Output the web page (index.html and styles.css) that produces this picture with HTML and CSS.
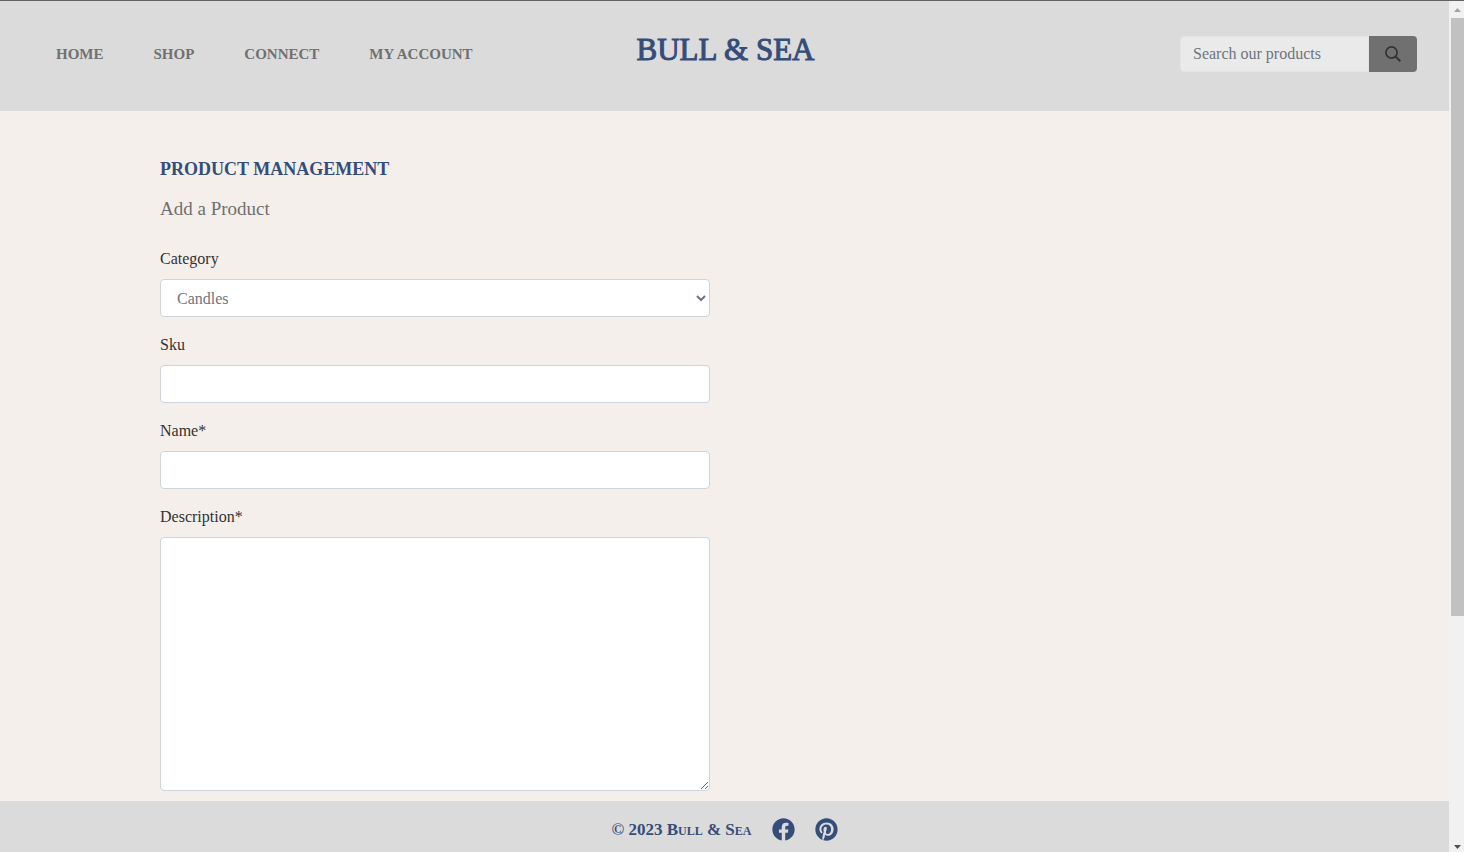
FILE: index.html
```html
<!DOCTYPE html>
<html lang="en">
<head>
<meta charset="utf-8">
<meta name="viewport" content="width=device-width, initial-scale=1">
<title>Bull &amp; Sea</title>
<link rel="stylesheet" href="styles.css">
</head>
<body>
<div class="window">
  <div class="page">
    <header class="header">
      <nav class="nav">
        <a href="#">HOME</a>
        <a href="#">SHOP</a>
        <a href="#">CONNECT</a>
        <a href="#">MY ACCOUNT</a>
      </nav>
      <a class="brand" href="#">BULL &amp; SEA</a>
      <form class="search">
        <input class="search-input" type="text" placeholder="Search our products" aria-label="Search our products">
        <button class="search-button" type="button" aria-label="Search">
          <svg width="16" height="16" viewBox="0 0 16 16" fill="none" stroke="currentColor" aria-hidden="true"><circle cx="6.500" cy="6.500" r="5.600" stroke-width="1.700"/><path d="M10.600 10.600l4.700 4.700" stroke-width="2"/></svg>
        </button>
      </form>
    </header>
    <main class="main">
      <h1 class="title">PRODUCT MANAGEMENT</h1>
      <h2 class="subtitle">Add a Product</h2>
      <form class="form">
        <div class="field">
          <label for="category">Category</label>
          <select class="control select" id="category"><option>Candles</option></select>
        </div>
        <div class="field">
          <label for="sku">Sku</label>
          <input class="control" id="sku" type="text">
        </div>
        <div class="field">
          <label for="name">Name*</label>
          <input class="control" id="name" type="text" required>
        </div>
        <div class="field">
          <label for="description">Description*</label>
          <textarea class="control area" id="description" rows="10" required></textarea>
        </div>
      </form>
    </main>
    <footer class="footer">
      <span class="copyright">© 2023 Bull &amp; Sea</span>
      <a href="#" aria-label="Facebook"><svg width="23" height="23" viewBox="0 0 512 512" aria-hidden="true"><path fill="currentColor" d="M504 256C504 119 393 8 256 8S8 119 8 256c0 123.780 90.690 226.380 209.250 245V327.690h-63V256h63v-54.640c0-62.150 37-96.480 93.670-96.480 27.140 0 55.520 4.840 55.520 4.840v61h-31.280c-30.800 0-40.410 19.120-40.410 38.730V256h68.780l-11 71.690h-57.780V501C413.310 482.380 504 379.780 504 256z"/></svg></a>
      <a href="#" aria-label="Pinterest"><svg width="23" height="23" viewBox="0 0 496 512" aria-hidden="true"><path fill="currentColor" d="M496 256c0 137-111 248-248 248-25.600 0-50.200-3.900-73.400-11.100 10.100-16.500 25.200-43.500 30.800-65 3-11.600 15.400-59 15.400-59 8.100 15.400 31.700 28.500 56.800 28.500 74.800 0 128.700-68.800 128.700-154.300 0-81.900-66.900-143.200-152.900-143.200-107 0-163.900 71.800-163.900 150.100 0 36.400 19.400 81.700 50.300 96.100 4.700 2.200 7.200 1.200 8.300-3.300.8-3.400 5-20.300 6.900-28.100.6-2.500.3-4.700-1.700-7.100-10.100-12.500-18.300-35.300-18.300-56.600 0-54.700 41.400-107.600 112-107.600 60.900 0 103.600 41.500 103.600 100.900 0 67.100-33.900 113.600-78 113.600-24.300 0-42.600-20.100-36.700-44.800 7-29.500 20.500-61.300 20.500-82.600 0-19-10.200-34.900-31.400-34.900-24.900 0-44.900 25.700-44.900 60.200 0 22 7.400 36.800 7.400 36.800s-24.500 103.800-29 123.200c-5 21.400-3 51.600-.9 71.200C65.400 450.900 0 361.100 0 256 0 119 111 8 248 8s248 111 248 248z"/></svg></a>
    </footer>
  </div>
  <div class="scrollbar" aria-hidden="true">
    <svg class="arrow up" width="13" height="17" viewBox="0 0 13 17"><path fill="currentColor" d="M3 11h7L6.500 7z"/></svg>
    <div class="track"><div class="thumb"></div></div>
    <svg class="arrow" width="13" height="17" viewBox="0 0 13 17"><path fill="currentColor" d="M3 10h7L6.500 14z"/></svg>
  </div>
</div>
</body>
</html>
```
FILE: styles.css
```css
* { box-sizing: border-box; }

body {
  margin: 0;
  font-family: "Liberation Serif", "Times New Roman", serif;
  font-size: 16px;
  line-height: 24px;
  color: #333;
  background: #f4efeb;
}

a { color: inherit; text-decoration: none; }
svg { display: block; }

.window {
  display: flex;
  height: 100vh;
  border-top: 1px solid #656163;
}

.page {
  flex: 1;
  min-width: 0;
  display: flex;
  flex-direction: column;
}

.header {
  display: grid;
  grid-template-columns: 1fr auto 1fr;
  align-items: start;
  padding: 32px 32px 36px 56px;
  background: #dbdbdb;
}

.nav {
  display: flex;
  gap: 50px;
  padding-top: 9px;
  font-size: 15px;
  font-weight: 700;
  color: #707070;
}

.brand {
  margin-right: 22px;
  font-size: 31px;
  line-height: 34px;
  color: #354d79;
  -webkit-text-stroke: 1px #354d79;
}

.search {
  display: flex;
  justify-self: end;
  padding: 3px 0;
}

.search-input {
  width: 189px;
  height: 36px;
  padding: 0 12px;
  border: 1px solid #e4e4e4;
  border-radius: 4px 0 0 4px;
  background: #eaeaea;
  font: inherit;
}

.search-input::placeholder { color: #6c757d; opacity: 1; }

.search-button {
  display: grid;
  place-items: center;
  width: 48px;
  padding: 0;
  border: 0;
  border-radius: 0 4px 4px 0;
  background: #707070;
  color: #333;
}

.main {
  flex: 1;
  min-height: 0;
  overflow: hidden;
  padding: 46px 160px 0;
}

.title {
  margin: 0 0 16px;
  font-size: 18px;
  font-weight: 700;
  line-height: 24px;
  color: #354d79;
}

.subtitle {
  margin: 0 0 26px;
  font-size: 19px;
  font-weight: 400;
  line-height: 24px;
  color: #707070;
}

.form {
  display: grid;
  gap: 16px;
  max-width: 550px;
}

.field { display: grid; gap: 8px; }

.control {
  width: 100%;
  height: 38px;
  padding: 6px 12px;
  border: 1px solid #ced4da;
  border-radius: 4px;
  background: #fff;
  color: #6c757d;
  font: inherit;
}

.select { padding-right: 1px; }
.area { height: 254px; resize: vertical; }

.footer {
  display: flex;
  justify-content: center;
  align-items: center;
  gap: 20px;
  height: 51px;
  padding-top: 6px;
  background: #dbdbdb;
  color: #354d79;
}

.copyright {
  font-size: 17px;
  font-weight: 700;
  font-variant: small-caps;
}

.scrollbar {
  display: flex;
  flex-direction: column;
  width: 15px;
  padding-left: 2px;
  background: #f1f1f1;
  color: #505050;
}

.up { color: #a3a3a3; }
.track { flex: 1; }
.thumb { height: 73.2%; background: #c1c1c1; }
```
